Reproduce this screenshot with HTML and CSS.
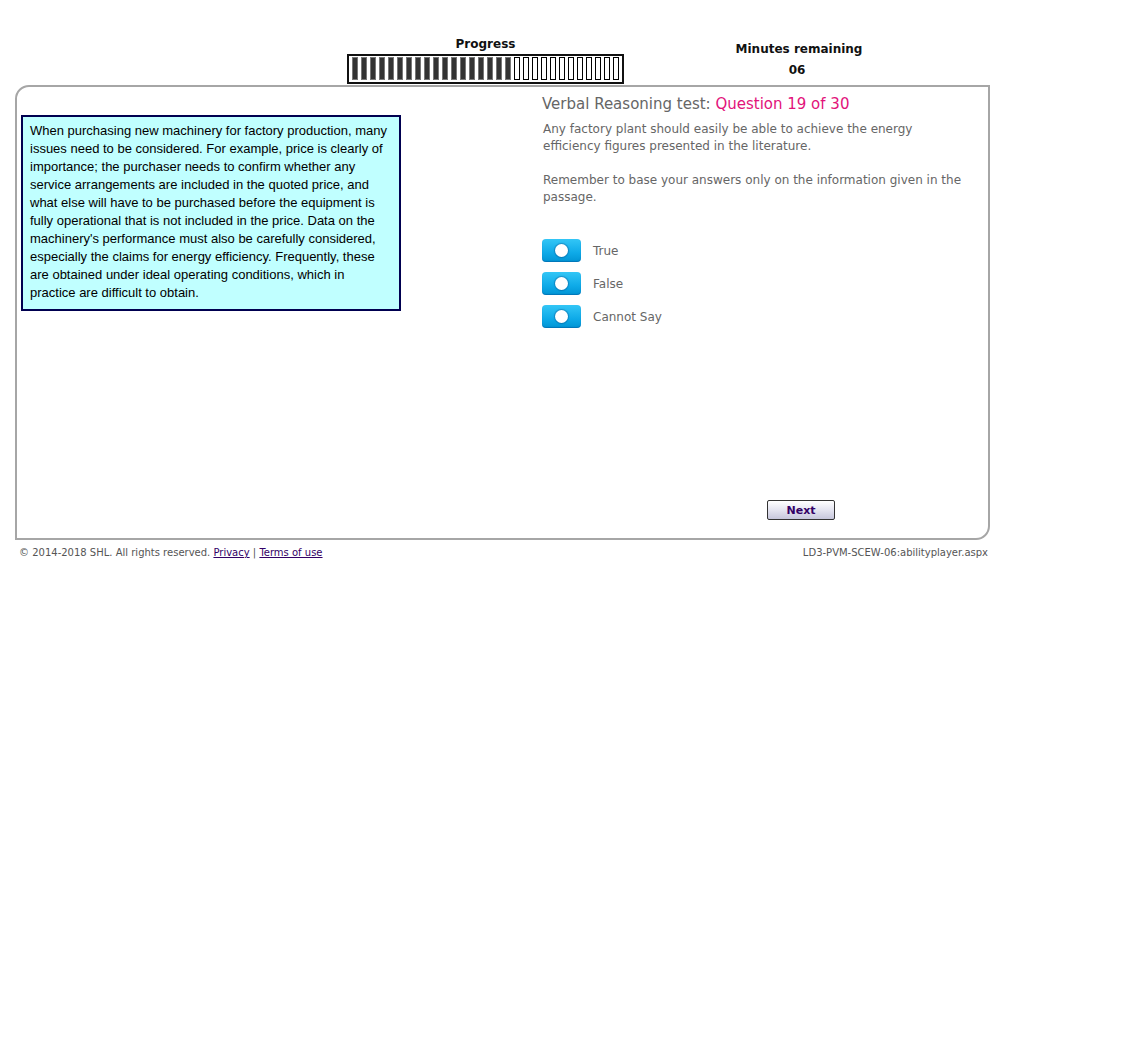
FILE: index.html
```html
<!DOCTYPE html>
<html>
<head>
<meta charset="utf-8">
<link rel="stylesheet" href="styles.css">
</head>
<body>
<div class="page">
  <div class="header">
    <div class="progress">
      <div class="progress-label">Progress</div>
      <div class="progress-box" id="bars"></div>
    </div>
    <div class="timer">
      <div class="timer-label">Minutes remaining</div>
      <div class="timer-value">06</div>
    </div>
  </div>
  <div class="panel">
    <div class="left">
      <div class="passage">When purchasing new machinery for factory production, many issues need to be considered. For example, price is clearly of importance; the purchaser needs to confirm whether any service arrangements are included in the quoted price, and what else will have to be purchased before the equipment is fully operational that is not included in the price. Data on the machinery's performance must also be carefully considered, especially the claims for energy efficiency. Frequently, these are obtained under ideal operating conditions, which in practice are difficult to obtain.</div>
    </div>
    <div class="right">
      <div class="title">Verbal Reasoning test: <span class="qnum">Question 19 of 30</span></div>
      <div class="question">Any factory plant should easily be able to achieve the energy efficiency figures presented in the literature.<br><br>Remember to base your answers only on the information given in the passage.</div>
      <div class="options">
        <div class="option"><span class="toggle"><span class="dot"></span></span><span class="opt-label">True</span></div>
        <div class="option"><span class="toggle"><span class="dot"></span></span><span class="opt-label">False</span></div>
        <div class="option"><span class="toggle"><span class="dot"></span></span><span class="opt-label">Cannot Say</span></div>
      </div>
      <div class="next-row"><button class="next">Next</button></div>
    </div>
  </div>
  <div class="footer">
    <div class="copy">© 2014-2018 SHL. All rights reserved. <a href="#">Privacy</a> | <a href="#">Terms of use</a></div>
    <div class="server">LD3-PVM-SCEW-06:abilityplayer.aspx</div>
  </div>
</div>
<script>
  var box = document.getElementById('bars');
  for (var i = 0; i < 30; i++) {
    var b = document.createElement('span');
    b.className = i < 18 ? 'bar filled' : 'bar';
    box.appendChild(b);
  }
</script>
</body>
</html>
```
FILE: styles.css
```css
html, body {
  margin: 0;
  padding: 0;
  background: #fff;
}
.page {
  padding-left: 15px;
  width: 975px;
  font-family: "DejaVu Sans", Verdana, sans-serif;
}
.header {
  height: 85px;
  display: flex;
}
.progress {
  margin-left: 332px;
  padding-top: 37px;
  width: 277px;
}
.progress-label {
  font-size: 12px;
  font-weight: bold;
  line-height: 15px;
  text-align: center;
  color: #111;
}
.progress-box {
  margin-top: 2px;
  box-sizing: border-box;
  height: 30px;
  border: 2px solid #111;
  padding: 1px 2px 2px 3px;
  display: flex;
  gap: 3px;
}
.bar {
  box-sizing: border-box;
  width: 6px;
  height: 23px;
  border: 1px solid #000;
  background: #fff;
}
.bar.filled {
  background: #333;
  border-color: #777;
}
.timer {
  margin-left: 95px;
  width: 160px;
  padding-top: 42px;
  text-align: center;
  font-size: 12px;
  font-weight: bold;
  line-height: 15px;
  color: #111;
}
.timer-value {
  margin-top: 6px;
  margin-left: -4px;
}
.panel {
  box-sizing: border-box;
  width: 975px;
  height: 455px;
  border: 2px solid #a6a6a6;
  border-radius: 14px 0 14px 0;
  display: flex;
}
.left {
  width: 525px;
  padding: 28px 0 0 4px;
  box-sizing: border-box;
}
.passage {
  box-sizing: border-box;
  width: 380px;
  border: 2px solid #000050;
  background: #c0ffff;
  padding: 5px 6px 7px 7px;
  font-family: "Liberation Sans", Arial, sans-serif;
  font-size: 13px;
  line-height: 18px;
  color: #000;
}
.right {
  flex: 1;
  padding-top: 8px;
  display: flex;
  flex-direction: column;
}
.title {
  font-size: 15px;
  line-height: 18px;
  color: #666;
}
.qnum {
  color: #e2127a;
}
.question {
  margin-top: 8px;
  margin-left: 1px;
  width: 430px;
  font-size: 12px;
  line-height: 17px;
  color: #666;
}
.options {
  margin-top: 33px;
  display: flex;
  flex-direction: column;
  gap: 10px;
}
.option {
  display: flex;
  align-items: center;
  height: 23px;
}
.toggle {
  box-sizing: border-box;
  width: 39px;
  height: 23px;
  border-radius: 4px;
  background: linear-gradient(#33c6f6, #0eaae8 60%, #0094d4);
  box-shadow: inset 0 -1px 1px rgba(0,70,140,0.4);
  display: flex;
  align-items: center;
  justify-content: center;
}
.dot {
  width: 13px;
  height: 13px;
  border-radius: 50%;
  background: #fff;
  box-shadow: 0 0 1px 1px rgba(0,60,120,0.35);
}
.opt-label {
  margin-left: 12px;
  font-size: 12px;
  color: #666;
}
.next-row {
  margin-top: auto;
  margin-bottom: 18px;
  padding-left: 225px;
}
.next {
  box-sizing: border-box;
  width: 68px;
  height: 20px;
  border: 1px solid #333;
  border-radius: 2px;
  background: linear-gradient(#ffffff, #e4e4f0 50%, #c6c6dc);
  font-family: "DejaVu Sans", Verdana, sans-serif;
  font-size: 11px;
  font-weight: bold;
  color: #330066;
  padding: 0;
  cursor: pointer;
}
.footer {
  display: flex;
  justify-content: space-between;
  padding: 6px 2px 0 4px;
  font-size: 10px;
  line-height: 14px;
  color: #555;
}
.footer a {
  color: #330066;
}
```
